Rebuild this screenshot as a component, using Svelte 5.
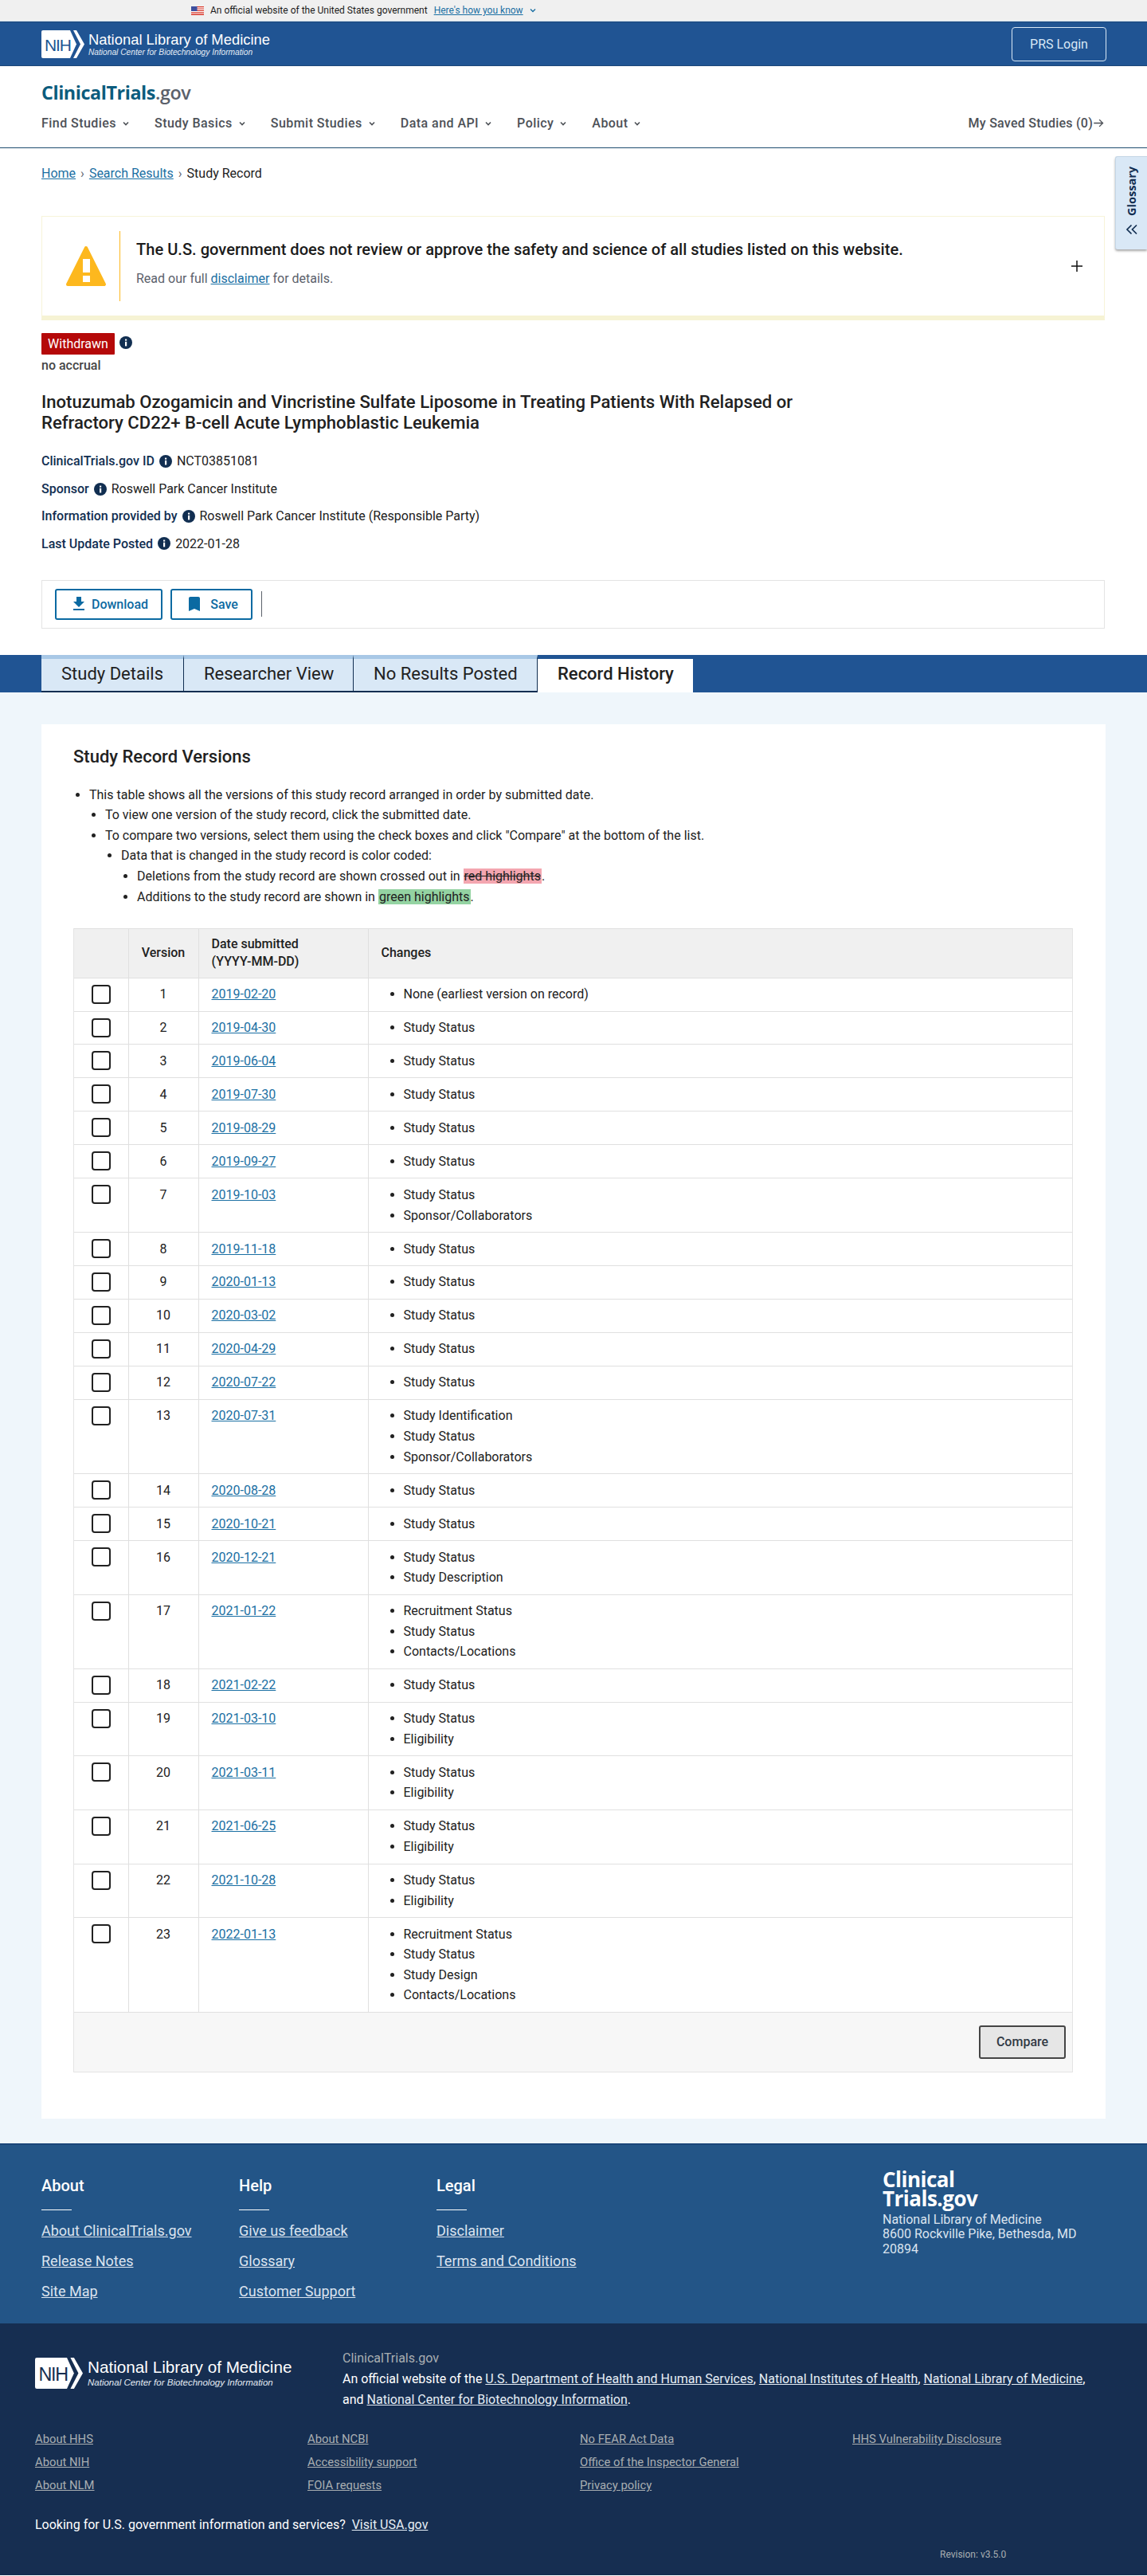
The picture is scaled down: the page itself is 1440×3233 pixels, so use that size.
<script>
  const navItems = ['Find Studies', 'Study Basics', 'Submit Studies', 'Data and API', 'Policy', 'About'];
  const tabs = ['Study Details', 'Researcher View', 'No Results Posted', 'Record History'];
  const meta = [
    { label: 'ClinicalTrials.gov ID', value: 'NCT03851081' },
    { label: 'Sponsor', value: 'Roswell Park Cancer Institute' },
    { label: 'Information provided by', value: 'Roswell Park Cancer Institute (Responsible Party)' },
    { label: 'Last Update Posted', value: '2022-01-28' }
  ];
  const versions = [
    ['2019-02-20', ['None (earliest version on record)']],
    ['2019-04-30', ['Study Status']],
    ['2019-06-04', ['Study Status']],
    ['2019-07-30', ['Study Status']],
    ['2019-08-29', ['Study Status']],
    ['2019-09-27', ['Study Status']],
    ['2019-10-03', ['Study Status', 'Sponsor/Collaborators']],
    ['2019-11-18', ['Study Status']],
    ['2020-01-13', ['Study Status']],
    ['2020-03-02', ['Study Status']],
    ['2020-04-29', ['Study Status']],
    ['2020-07-22', ['Study Status']],
    ['2020-07-31', ['Study Identification', 'Study Status', 'Sponsor/Collaborators']],
    ['2020-08-28', ['Study Status']],
    ['2020-10-21', ['Study Status']],
    ['2020-12-21', ['Study Status', 'Study Description']],
    ['2021-01-22', ['Recruitment Status', 'Study Status', 'Contacts/Locations']],
    ['2021-02-22', ['Study Status']],
    ['2021-03-10', ['Study Status', 'Eligibility']],
    ['2021-03-11', ['Study Status', 'Eligibility']],
    ['2021-06-25', ['Study Status', 'Eligibility']],
    ['2021-10-28', ['Study Status', 'Eligibility']],
    ['2022-01-13', ['Recruitment Status', 'Study Status', 'Study Design', 'Contacts/Locations']]
  ];
  const footerCols = [
    { title: 'About', links: ['About ClinicalTrials.gov', 'Release Notes', 'Site Map'] },
    { title: 'Help', links: ['Give us feedback', 'Glossary', 'Customer Support'] },
    { title: 'Legal', links: ['Disclaimer', 'Terms and Conditions'] }
  ];
  const govCols = [
    ['About HHS', 'About NIH', 'About NLM'],
    ['About NCBI', 'Accessibility support', 'FOIA requests'],
    ['No FEAR Act Data', 'Office of the Inspector General', 'Privacy policy'],
    ['HHS Vulnerability Disclosure']
  ];
</script>

{#snippet nihMark(ink)}
  <svg class="nih-mark" viewBox="0 0 54 35">
    <path fill="#fff" d="M2 0H36L44 17.500 36 35H2Q0 35 0 33V2Q0 0 2 0Z" />
    <path fill="#fff" d="M40 0H44L54 17.500 44 35H40L49 17.500Z" />
    <text x="4" y="26" font-family="Liberation Sans, sans-serif" font-size="21" fill={ink} textLength="34">NIH</text>
  </svg>
{/snippet}

{#snippet info()}
  <svg class="info" viewBox="0 0 16 16">
    <circle cx="8" cy="8" r="8" fill="#112e51" />
    <rect x="7" y="6.800" width="2.200" height="5.600" fill="#fff" />
    <rect x="7" y="3.600" width="2.200" height="2" fill="#fff" />
  </svg>
{/snippet}

{#snippet caret()}
  <svg class="caret" viewBox="0 0 10 10"><path d="M2 3.500 5 6.500 8 3.500" fill="none" stroke="currentColor" stroke-width="1.600" /></svg>
{/snippet}

<div class="gov-banner">
  <svg class="flag" viewBox="0 0 16 11">
    <rect width="16" height="11" fill="#fff" />
    <path d="M0 0h16v1.200H0zM0 2.400h16v1.200H0zM0 4.800h16V6H0zM0 7.200h16v1.200H0zM0 9.600h16V11H0z" fill="#d8392c" />
    <rect width="7.500" height="6" fill="#3d4f9f" />
  </svg>
  <span>An official website of the United States government</span>
  <a href="#top" class="know">Here's how you know</a>
  <svg class="caret know-caret" viewBox="0 0 10 10"><path d="M2 3.500 5 6.500 8 3.500" fill="none" stroke="currentColor" stroke-width="1.400" /></svg>
</div>

<header class="nih-bar">
  <div class="nih-logo">
    {@render nihMark('#205493')}
    <div class="nih-words">
      <div class="nih-name">National Library of Medicine</div>
      <div class="nih-sub">National Center for Biotechnology Information</div>
    </div>
  </div>
  <button class="prs">PRS Login</button>
</header>

<div class="site-head">
  <div class="brand"><span class="brand-a">ClinicalTrials</span><span class="brand-b">.gov</span></div>
  <nav class="nav">
    <div class="nav-left">
      {#each navItems as item}
        <span class="nav-item">{item}{@render caret()}</span>
      {/each}
    </div>
    <span class="saved">My Saved Studies (0)<svg class="arrow" viewBox="0 0 12 12"><path d="M1 6h9M6.500 2.500 10 6 6.500 9.500" fill="none" stroke="currentColor" stroke-width="1.100" /></svg></span>
  </nav>
</div>

<div class="glossary">
  <span>Glossary</span>
  <svg viewBox="0 0 16 16" class="dbl"><path d="M7.500 2.500 2 8l5.500 5.500M14 2.500 8.500 8l5.500 5.500" fill="none" stroke="#112e51" stroke-width="1.700" /></svg>
</div>

<div class="record">
  <div class="crumbs">
    <a href="#top">Home</a><i>›</i><a href="#top">Search Results</a><i>›</i><span>Study Record</span>
  </div>

  <section class="disclaimer">
    <svg class="warn" viewBox="0 0 52 52">
      <path d="M26 3 49 49H3Z" fill="#fdb81e" stroke="#fdb81e" stroke-width="4" stroke-linejoin="round" />
      <rect x="22" y="17" width="9" height="17" fill="#fff" />
      <rect x="22" y="38" width="9" height="8" fill="#fff" />
    </svg>
    <div class="disc-body">
      <div class="disc-title">The U.S. government does not review or approve the safety and science of all studies listed on this website.</div>
      <div class="disc-sub">Read our full <a href="#top">disclaimer</a> for details.</div>
    </div>
    <svg class="plus" viewBox="0 0 14 14"><path d="M7 0v14M0 7h14" stroke="#111" stroke-width="1.500" /></svg>
  </section>

  <div class="status">
    <span class="badge">Withdrawn</span>
    {@render info()}
  </div>
  <div class="accrual">no accrual</div>

  <h1>Inotuzumab Ozogamicin and Vincristine Sulfate Liposome in Treating Patients With Relapsed or Refractory CD22+ B-cell Acute Lymphoblastic Leukemia</h1>

  <dl class="meta">
    {#each meta as row}
      <div class="meta-row">
        <dt>{row.label}</dt>
        {@render info()}
        <dd>{row.value}</dd>
      </div>
    {/each}
  </dl>

  <div class="actions">
    <button class="outline dl">
      <svg viewBox="0 0 24 24"><path d="M19 9h-4V3H9v6H5l7 7 7-7zM5 18v2h14v-2H5z" fill="currentColor" /></svg>
      Download
    </button>
    <button class="outline save">
      <svg viewBox="0 0 24 24"><path d="M17 3H7c-1.100 0-1.990.9-1.990 2L5 21l7-3 7 3V5c0-1.100-.9-2-2-2z" fill="currentColor" /></svg>
      Save
    </button>
    <span class="sep"></span>
  </div>
</div>

<div class="tabs">
  {#each tabs as tab, i}
    <div class="tab" class:active={i === 3}>{tab}</div>
  {/each}
</div>

<main class="main">
  <section class="card">
    <h2>Study Record Versions</h2>
    <ul class="help">
      <li>This table shows all the versions of this study record arranged in order by submitted date.
        <ul>
          <li>To view one version of the study record, click the submitted date.</li>
          <li>To compare two versions, select them using the check boxes and click "Compare" at the bottom of the list.
            <ul>
              <li>Data that is changed in the study record is color coded:
                <ul>
                  <li>Deletions from the study record are shown crossed out in <del>red highlights</del>.</li>
                  <li>Additions to the study record are shown in <ins>green highlights</ins>.</li>
                </ul>
              </li>
            </ul>
          </li>
        </ul>
      </li>
    </ul>

    <div class="table-wrap">
      <table>
        <thead>
          <tr>
            <th class="c-check"></th>
            <th class="c-ver">Version</th>
            <th class="c-date">Date submitted<br /><span>(YYYY-MM-DD)</span></th>
            <th>Changes</th>
          </tr>
        </thead>
        <tbody>
          {#each versions as [date, changes], i}
            <tr>
              <td class="c-check"><span class="box"></span></td>
              <td class="c-ver">{i + 1}</td>
              <td class="c-date"><a href="#top">{date}</a></td>
              <td>
                <ul class="changes">
                  {#each changes as c}<li>{c}</li>{/each}
                </ul>
              </td>
            </tr>
          {/each}
        </tbody>
      </table>
      <div class="table-foot"><button class="compare">Compare</button></div>
    </div>
  </section>
</main>

<footer>
  <div class="foot-top">
    {#each footerCols as col}
      <div class="foot-col">
        <h3>{col.title}</h3>
        {#each col.links as l}<a href="#top">{l}</a>{/each}
      </div>
    {/each}
    <div class="foot-addr">
      <div class="foot-brand">Clinical<br />Trials.gov</div>
      <p>National Library of Medicine<br />8600 Rockville Pike, Bethesda, MD 20894</p>
    </div>
  </div>

  <div class="foot-gov">
    <div class="gov-row">
      <div class="nih-logo big">
        {@render nihMark('#162e51')}
        <div class="nih-words">
          <div class="nih-name">National Library of Medicine</div>
          <div class="nih-sub">National Center for Biotechnology Information</div>
        </div>
      </div>
      <div class="gov-text">
        <div class="gov-site">ClinicalTrials.gov</div>
        <div>An official website of the <a href="#top">U.S. Department of Health and Human Services</a>, <a href="#top">National Institutes of Health</a>, <a href="#top">National Library of Medicine</a>, and <a href="#top">National Center for Biotechnology Information</a>.</div>
      </div>
    </div>
    <div class="gov-links">
      {#each govCols as col}
        <div class="gov-col">
          {#each col as l}<a href="#top">{l}</a>{/each}
        </div>
      {/each}
    </div>
    <div class="usa">Looking for U.S. government information and services? &nbsp;<a href="#top">Visit USA.gov</a></div>
    <div class="revision">Revision: v3.5.0</div>
  </div>
</footer>

<style>
  :global(body) {
    font-family: Roboto, "Liberation Sans", sans-serif;
    font-size: 16px;
    line-height: 1.6;
    color: #212121;
    background: #fff;
  }
  a {
    color: #1a6fa3;
    text-decoration: underline;
  }
  button {
    font-family: inherit;
    cursor: pointer;
  }

  .gov-banner {
    height: 26px;
    background: #f0f0f0;
    border-bottom: 1px solid #cfe0f0;
    display: flex;
    align-items: center;
    padding-left: 240px;
    font-size: 12px;
    line-height: 1;
    color: #1b1b1b;
  }
  .flag {
    width: 16px;
    height: 11px;
    margin-right: 8px;
  }
  .know {
    margin-left: 8px;
    color: #1a6fa3;
  }
  .know-caret {
    margin-left: 4px;
    color: #1a6fa3;
  }
  .caret {
    width: 10px;
    height: 10px;
    margin-left: 7px;
  }

  .nih-bar {
    height: 54px;
    background: #205493;
    border-top: 1px solid #1b4679;
    border-bottom: 1px solid #1b4679;
    padding: 0 51px 0 52px;
    display: flex;
    align-items: center;
    justify-content: space-between;
  }
  .nih-logo {
    display: flex;
    align-items: center;
    gap: 5px;
    color: #fff;
  }
  .nih-mark {
    width: 54px;
    height: 35px;
    display: block;
  }
  .nih-words {
    font-family: "Liberation Sans", Arial, sans-serif;
  }
  .nih-name {
    font-size: 18.400px;
    line-height: 21px;
    white-space: nowrap;
  }
  .nih-sub {
    font-size: 10.200px;
    line-height: 12px;
    font-style: italic;
    white-space: nowrap;
    color: #e4ebf3;
  }
  .prs {
    width: 119px;
    height: 43px;
    border: 1px solid #d9e8f6;
    border-radius: 4px;
    background: transparent;
    color: #d9e8f6;
    font-size: 16px;
  }

  .site-head {
    height: 102px;
    border-bottom: 1px solid #1f4e6f;
    padding: 0 53px 0 52px;
    display: flex;
    flex-direction: column;
  }
  .brand {
    margin-top: 17px;
    font-family: "Open Sans", sans-serif;
    font-size: 23.300px;
    line-height: 32px;
    font-weight: 600;
    letter-spacing: -0.4px;
  }
  .brand-a {
    color: #0b5c7d;
    font-weight: 700;
  }
  .brand-b {
    color: #5b616b;
  }
  .nav {
    margin-top: 10px;
    display: flex;
    justify-content: space-between;
    align-items: center;
    font-weight: 500;
    color: #4d5157;
  }
  .nav-left {
    display: flex;
    gap: 31px;
  }
  .nav-item {
    display: inline-flex;
    align-items: center;
    letter-spacing: 0.45px;
  }
  .saved {
    display: inline-flex;
    align-items: center;
    letter-spacing: 0.25px;
  }
  .arrow {
    width: 15px;
    height: 15px;
    margin-left: 0;
  }

  .glossary {
    position: absolute;
    right: 0;
    top: 196px;
    width: 40px;
    height: 117px;
    box-sizing: border-box;
    background: #d9e8f6;
    border-top: 1px solid #c4d6e6;
    border-left: 1px solid #c4d6e6;
    box-shadow: 0 2px 3px rgba(0, 0, 0, 0.35);
    border-radius: 3px 0 0 3px;
    display: flex;
    flex-direction: column;
    align-items: center;
    padding-top: 12px;
    gap: 9px;
  }
  .glossary span {
    writing-mode: vertical-rl;
    transform: rotate(180deg);
    font-family: "Open Sans", sans-serif;
    font-weight: 700;
    font-size: 14.500px;
    line-height: 18px;
    color: #112e51;
  }
  .dbl {
    width: 16px;
    height: 16px;
  }

  .record {
    padding: 0 53px 0 52px;
  }
  .crumbs {
    padding-top: 19px;
    height: 85px;
    box-sizing: border-box;
    line-height: 25.600px;
  }
  .crumbs i {
    font-style: normal;
    margin: 0 6px;
    color: #5b616b;
  }
  .disclaimer {
    height: 131px;
    box-sizing: border-box;
    border: 1px solid #f7f4d9;
    border-bottom: 6px solid #f6f3d4;
    display: flex;
    align-items: center;
    position: relative;
    padding-left: 29px;
    margin-bottom: 16px;
  }
  .warn {
    width: 52px;
    height: 52px;
    flex: none;
  }
  .disc-body {
    margin-left: 16px;
    height: 88px;
    border-left: 1px solid #fdb81e;
    padding-left: 20px;
  }
  .disc-title {
    font-size: 20.100px;
    font-weight: 500;
    line-height: 28px;
    margin-top: 9px;
    color: #1b1b1b;
  }
  .disc-sub {
    margin-top: 10px;
    color: #5b616b;
  }
  .plus {
    position: absolute;
    right: 27px;
    top: 55px;
    width: 14px;
    height: 14px;
  }
  .status {
    display: flex;
    align-items: center;
    gap: 6px;
  }
  .badge {
    background: #b50909;
    color: #fff;
    height: 27px;
    line-height: 27px;
    width: 92px;
    text-align: center;
    border-radius: 1px;
  }
  .info {
    width: 16px;
    height: 16px;
    flex: none;
  }
  .status .info {
    margin-top: -4px;
  }
  .accrual {
    font-weight: 500;
    color: #454545;
    margin-top: 1px;
    line-height: 26px;
  }
  h1 {
    margin: 19px 0 0;
    font-size: 22.100px;
    font-weight: 500;
    line-height: 26px;
    color: #212121;
    max-width: 960px;
  }
  .meta {
    margin: 19px 0 0;
  }
  .meta-row {
    display: flex;
    align-items: center;
    height: 34.400px;
    gap: 6px;
  }
  dt {
    font-weight: 500;
    color: #112e51;
  }
  dd {
    margin: 0;
  }
  .actions {
    margin-top: 28px;
    height: 61px;
    box-sizing: border-box;
    border: 1px solid #e4e4e4;
    display: flex;
    align-items: center;
    padding-left: 16px;
    gap: 10px;
  }
  .outline {
    height: 39px;
    background: #fff;
    border: 2px solid #0b6aa2;
    border-radius: 3px;
    color: #0b6aa2;
    font-weight: 500;
    font-size: 16px;
    display: inline-flex;
    align-items: center;
    justify-content: center;
    padding: 0;
  }
  .outline svg {
    width: 24px;
    height: 24px;
  }
  .dl {
    width: 135px;
    gap: 4px;
  }
  .save {
    width: 103px;
    gap: 8px;
  }
  .sep {
    width: 1px;
    height: 32px;
    background: #5b616b;
    margin-left: 1px;
  }

  .tabs {
    margin-top: 33px;
    height: 47px;
    background: #205493;
    padding-left: 52px;
    display: flex;
  }
  .tab {
    box-sizing: border-box;
    height: 47px;
    padding-left: 25px;
    background: #d9e8f6;
    border-top: 5px solid #a8c8e6;
    border-right: 1px solid #112e51;
    border-bottom: 2px solid #112e51;
    font-size: 22px;
    line-height: 38px;
    color: #212121;
    white-space: nowrap;
  }
  .tab:nth-child(1) {
    width: 179px;
  }
  .tab:nth-child(2) {
    width: 213px;
  }
  .tab:nth-child(3) {
    width: 231px;
  }
  .tab.active {
    width: 195px;
    background: #fff;
    border-top-color: #205493;
    border-right: none;
    border-bottom: none;
    font-weight: 500;
    color: #212121;
  }

  .main {
    background: #eff6fb;
    padding: 40px 52px 31px;
  }
  .card {
    background: #fff;
    padding: 24px 41px 58px 40px;
  }
  h2 {
    margin: 0;
    font-size: 22px;
    font-weight: 500;
    line-height: 34px;
  }
  .help,
  .help ul {
    margin: 0;
    padding-left: 20px;
    list-style: square;
  }
  .help {
    margin-top: 18px;
    list-style: disc;
  }
  .help ul {
    list-style: disc;
  }
  del {
    background: #f4a6b0;
    text-decoration: line-through;
    padding: 0 1px;
  }
  ins {
    background: #94d3a2;
    text-decoration: none;
    padding: 0 1px;
  }
  .table-wrap {
    margin-top: 26.400px;
    border: 1px solid #e4e4e4;
    border-top: none;
  }
  table {
    width: 100%;
    border-collapse: collapse;
    table-layout: fixed;
  }
  th {
    background: #f0f0f0;
    border: 1px solid #e0e0e0;
    text-align: left;
    font-weight: 500;
    height: 61px;
    padding: 0 16px;
    line-height: 22px;
  }
  td {
    border: 1px solid #e0e0e0;
    vertical-align: top;
    padding: 7.500px 16px 7.900px;
    line-height: 25.600px;
  }
  th:first-child,
  td:first-child {
    border-left: none;
  }
  th:last-child,
  td:last-child {
    border-right: none;
  }
  .c-check {
    width: 68px;
    box-sizing: border-box;
    padding: 8px 0 0 22px;
  }
  .c-ver {
    width: 88px;
    box-sizing: border-box;
    text-align: center;
    padding-left: 0;
    padding-right: 0;
  }
  .c-date {
    width: 213px;
    box-sizing: border-box;
  }
  .box {
    display: block;
    width: 24px;
    height: 24px;
    box-sizing: border-box;
    border: 2px solid #212121;
    border-radius: 4px;
    background: #fff;
  }
  .changes {
    margin: 0;
    padding-left: 28px;
  }
  .table-foot {
    height: 74px;
    box-sizing: border-box;
    background: #f7f7f7;
    display: flex;
    align-items: center;
    justify-content: flex-end;
    padding-right: 8px;
  }
  .compare {
    width: 109px;
    height: 42px;
    background: #e6e6e6;
    border: 2px solid #454545;
    border-radius: 3px;
    color: #323a45;
    font-size: 16px;
    font-weight: 500;
  }

  .foot-top {
    height: 226px;
    box-sizing: border-box;
    background: #235587;
    border-top: 2px solid #1b4679;
    padding: 31px 0 0 52px;
    display: flex;
    position: relative;
  }
  .foot-col {
    width: 248px;
    padding-top: 4px;
    display: flex;
    flex-direction: column;
    align-items: flex-start;
  }
  h3 {
    margin: 0;
    color: #fff;
    font-size: 20px;
    font-weight: 500;
    line-height: 32px;
    width: 38px;
    padding-bottom: 14px;
    border-bottom: 1px solid #fff;
    white-space: nowrap;
    margin-bottom: 7px;
  }
  .foot-col a {
    color: #dce4ef;
    font-size: 18px;
    line-height: 38px;
  }
  .foot-addr {
    margin-left: 312px;
    width: 260px;
    color: #dce4ef;
  }
  .foot-brand {
    font-family: "Open Sans", sans-serif;
    font-weight: 700;
    font-size: 26px;
    line-height: 24px;
    color: #fff;
    letter-spacing: -0.5px;
  }
  .foot-addr p {
    margin: 6px 0 0;
    line-height: 18.500px;
  }
  .foot-gov {
    height: 316px;
    box-sizing: border-box;
    background: #162e51;
    padding: 31px 44px 0;
    position: relative;
  }
  .gov-row {
    display: flex;
  }
  .nih-logo.big {
    align-self: flex-start;
    margin-top: 12px;
    width: 386px;
    flex: none;
    gap: 6px;
  }
  .big .nih-mark {
    width: 60px;
    height: 39px;
  }
  .big .nih-name {
    font-size: 20.700px;
    line-height: 24px;
  }
  .big .nih-sub {
    font-size: 11.500px;
    line-height: 14px;
  }
  .gov-text {
    color: #fff;
    line-height: 26px;
    width: 940px;
    flex: none;
  }
  .gov-text a {
    color: #e6eef6;
  }
  .gov-site {
    color: #a9aeb1;
  }
  .gov-links {
    display: flex;
    margin-top: 22.500px;
  }
  .gov-col {
    width: 342px;
    flex: none;
    display: flex;
    flex-direction: column;
    align-items: flex-start;
  }
  .gov-col a {
    color: #a9aeb1;
    font-size: 14.800px;
    line-height: 29px;
  }
  .usa {
    margin-top: 21.500px;
    color: #fff;
  }
  .usa a {
    color: #e6eef6;
  }
  .revision {
    position: absolute;
    left: 1180px;
    top: 281px;
    font-size: 12px;
    line-height: 18px;
    color: #a9aeb1;
  }
</style>
